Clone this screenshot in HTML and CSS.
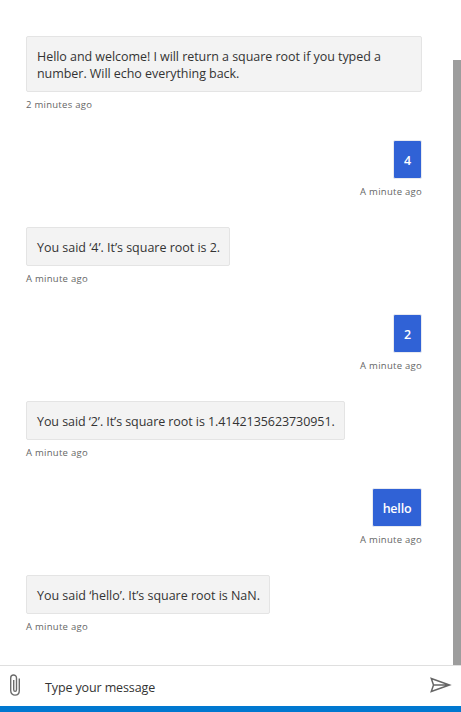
FILE: index.html
```html
<!DOCTYPE html>
<html lang="en">
<head>
<meta charset="utf-8">
<title>Chat</title>
<link rel="stylesheet" href="styles.css">
</head>
<body>
<div class="chat">
  <div class="view">
    <main class="messages">
      <div class="message bot"><div class="bubble"><p>Hello and welcome! I will return a square root if you typed a</p><p>number. Will echo everything back.</p></div><div class="time">2 minutes ago</div></div>
      <div class="message user"><div class="bubble">4</div><div class="time">A minute ago</div></div>
      <div class="message bot"><div class="bubble w4"><p>You said ‘4’. It’s square root is 2.</p></div><div class="time">A minute ago</div></div>
      <div class="message user"><div class="bubble">2</div><div class="time">A minute ago</div></div>
      <div class="message bot"><div class="bubble w2"><p>You said ‘2’. It’s square root is 1.4142135623730951.</p></div><div class="time">A minute ago</div></div>
      <div class="message user"><div class="bubble hello">hello</div><div class="time">A minute ago</div></div>
      <div class="message bot"><div class="bubble wh"><p>You said ‘hello’. It’s square root is NaN.</p></div><div class="time">A minute ago</div></div>
    </main>
    <div class="scroll"><div class="thumb"></div></div>
  </div>
  <footer class="console">
    <svg class="clip" width="12" height="24" viewBox="0 0 12 24" fill="none" stroke="#6b6b6b" stroke-width="1.4"><path d="M10.300 5.500V17.500C10.300 23.700 1.700 23.700 1.700 17.500V5C1.700 0.900 7.500 0.900 7.500 5V16.500C7.500 19 4.700 19 4.700 16.500V7"/></svg>
    <span class="placeholder">Type your message</span>
    <svg class="send" width="22" height="16" viewBox="0 0 22 16" fill="none" stroke="#666" stroke-width="1.5"><path d="M1.300 1.500 19.500 8 1.300 14.500 3.500 8ZM3.500 8H20"/></svg>
  </footer>
  <div class="base"></div>
</div>
</body>
</html>
```
FILE: styles.css
```css
* { box-sizing: border-box; }
body { margin: 0; background: #fff; color: #333; font: 12.5px/17px "Open Sans", "Noto Sans", sans-serif; }
p { margin: 0; }
.chat { display: flex; flex-direction: column; height: 712px; width: 461px; overflow: hidden; }
.view { display: flex; flex: 1; min-height: 0; }
.messages { flex: 1; padding: 36px 31px 0 26px; display: flex; flex-direction: column; }
.message { display: flex; flex-direction: column; align-items: flex-start; }
.user { align-items: flex-end; }
.bubble { border: 1px solid #e4e4e4; border-radius: 2px; background: #f3f3f3; padding: 11px 10px 9px; white-space: nowrap; letter-spacing: -0.05px; }
.bot:first-child .bubble { width: 396px; }
.user .bubble { background: #3062d6; color: #fff; font-weight: 600; border-color: #e8eaf0; padding: 11px 0 9px; width: 29px; text-align: center; letter-spacing: -0.2px; }
.user .hello { width: 50px; }
.w4 { width: 204px; letter-spacing: -0.02px; }
.w2 { width: 319px; letter-spacing: -0.07px; }
.wh { width: 244px; letter-spacing: -0.02px; }
.time { height: 48px; padding-top: 5px; font-size: 9.5px; line-height: 16px; color: #666; letter-spacing: 0.27px; white-space: nowrap; }
.scroll { width: 8px; padding-top: 60px; display: flex; }
.thumb { flex: 1; background: #9d9d9d; }
.console { height: 41px; border-top: 1px solid #dfdfdf; display: flex; align-items: flex-start; padding: 0 9px; }
.clip { margin-top: 7px; }
.placeholder { margin: 13px auto 0 24px; letter-spacing: -0.12px; }
.send { margin-top: 11px; }
.base { height: 6px; background: #0078d0; }
```
